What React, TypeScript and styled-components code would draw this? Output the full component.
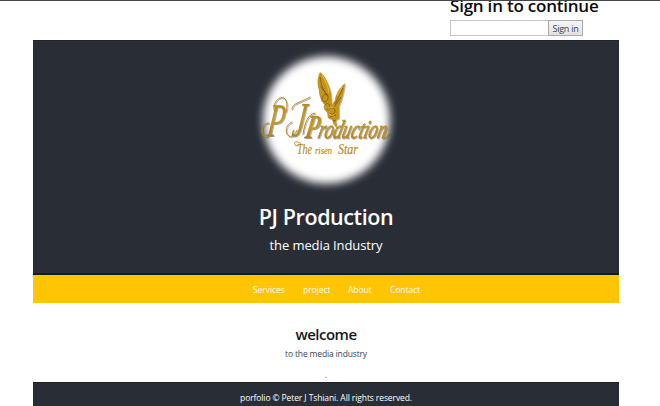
import React from "react";
import styled, { createGlobalStyle } from "styled-components";

const GlobalStyle = createGlobalStyle`
  * { box-sizing: border-box; }
  html, body { margin: 0; padding: 0; background: #fff; overflow: hidden; }
  body { font-family: "Open Sans", "Noto Sans", sans-serif; }
  h1, h2, p { margin: 0; }
`;

const Page = styled.div`
  height: 406px;
  overflow: hidden;
  border-top: 1px solid #444345;
  padding: 0 41px 0 33px;
  display: flex;
  flex-direction: column;
`;

const SignInBar = styled.section`
  height: 39px;
  flex: none;
  padding-left: 417px;
  display: flex;
  flex-direction: column;
`;

const SignInTitle = styled.h2`
  font-size: 17px;
  font-weight: 600;
  line-height: 24px;
  height: 19px;
  margin-top: -7px;
  margin-bottom: 7px;
  letter-spacing: -0.22px;
  white-space: nowrap;
  color: #0b0b0d;
`;

const SignInForm = styled.form`
  display: flex;
  height: 16px;
`;

const SignInInput = styled.input`
  width: 98px;
  height: 16px;
  padding: 0 3px;
  border: 1px solid #c6c6c6;
  border-right: 0;
  border-radius: 0;
  background: #fff;
  outline: none;
`;

const SignInButton = styled.button`
  width: 35px;
  height: 16px;
  padding: 0;
  border: 1px solid #ababab;
  border-radius: 0;
  background: linear-gradient(#f4f4f4, #e2e2e2);
  color: #3b4354;
  font: 400 9px/13px "Open Sans", sans-serif;
  letter-spacing: -0.25px;
`;

const Hero = styled.header`
  height: 235px;
  flex: none;
  background: #292d36;
  border-top: 1px solid #1f232b;
  border-bottom: 2px solid #151a28;
  display: flex;
  flex-direction: column;
  align-items: center;
  color: #fff;
`;

const Logo = styled.svg`
  width: 150px;
  height: 150px;
  margin-top: 4px;
  flex: none;
  display: block;
`;

const HeroTitle = styled.h1`
  font-size: 21.5px;
  font-weight: 600;
  line-height: 28px;
  margin-top: 8px;
  letter-spacing: -0.42px;
  white-space: nowrap;
`;

const HeroSubtitle = styled.p`
  font-size: 13px;
  line-height: 18px;
  margin-top: 5px;
  letter-spacing: -0.1px;
  white-space: nowrap;
`;

const Nav = styled.nav`
  height: 28px;
  flex: none;
  background: #ffc403;
  display: flex;
  gap: 18px;
  padding-left: 220px;
`;

const NavLink = styled.a<{ $width: number }>`
  width: ${(p) => p.$width}px;
  color: #fffdf4;
  font-size: 8.5px;
  line-height: 29px;
  letter-spacing: -0.06px;
  text-decoration: none;
  white-space: nowrap;
`;

const Main = styled.main`
  height: 79px;
  flex: none;
  display: flex;
  flex-direction: column;
  align-items: center;
  padding-top: 21px;
`;

const MainTitle = styled.h2`
  font-size: 15px;
  font-weight: 600;
  line-height: 20px;
  letter-spacing: -0.5px;
  color: #16181e;
`;

const MainText = styled.p`
  font-size: 8.5px;
  line-height: 12px;
  margin-top: 4px;
  letter-spacing: -0.15px;
  color: #3c4554;
  white-space: nowrap;
`;

const Dot = styled.p`
  font-size: 9px;
  line-height: 12px;
  margin-top: 9px;
  color: #4a6070;
`;

const Footer = styled.footer`
  flex: 1;
  background: #292d36;
  border-top: 1px solid #1c2028;
  color: #fff;
  text-align: center;
  font-size: 8.5px;
  line-height: 29px;
  letter-spacing: -0.1px;
  white-space: nowrap;
`;

const LINKS = [
  { label: "Services", width: 32 },
  { label: "project", width: 27 },
  { label: "About", width: 24 },
  { label: "Contact", width: 31 },
];

const script = '"Liberation Serif", serif';

function BrandLogo() {
  return (
    <Logo viewBox="251 45 150 150" role="img" aria-label="PJ Production">
      <defs>
        <filter id="soft" x="-20%" y="-20%" width="140%" height="140%">
          <feGaussianBlur stdDeviation="4" />
        </filter>
        <filter id="shade" x="-10%" y="-10%" width="120%" height="130%">
          <feDropShadow dx="0.7" dy="1" stdDeviation="0.7" floodColor="#343434" floodOpacity="0.5" />
        </filter>
        <linearGradient id="gold" x1="0" y1="0" x2="0" y2="1">
          <stop offset="0" stopColor="#a87a14" />
          <stop offset="0.5" stopColor="#c99c2a" />
          <stop offset="1" stopColor="#9f7114" />
        </linearGradient>
      </defs>
      <circle cx="326.5" cy="120" r="63.5" fill="#fff" filter="url(#soft)" />
      <g filter="url(#shade)" fontFamily={script} fontStyle="italic" fill="url(#gold)">
        <g transform="translate(266 136) skewX(-8)">
          <text fontSize="47" textLength="17" lengthAdjust="spacingAndGlyphs">P</text>
        </g>
        <g transform="translate(291 136) skewX(-8)">
          <text fontSize="49" textLength="13" lengthAdjust="spacingAndGlyphs">J</text>
        </g>
        <g transform="translate(304 138) skewX(-10)" fontWeight="700">
          <text fontSize="34" textLength="14" lengthAdjust="spacingAndGlyphs">P</text>
        </g>
        <g transform="translate(317 137.5) skewX(-14)">
          <text
            fontSize="26"
            textLength="68"
            lengthAdjust="spacingAndGlyphs"
            stroke="#b98a1c"
            strokeWidth="0.6"
          >
            roduction
          </text>
        </g>
        <g fill="none" stroke="#b98a1c" strokeWidth="1" strokeLinecap="round">
          <path d="M274 110c-1-8 5-14 10-12 3 2 4 8 2 14M269 123c-6 0-9 7-6 12 3 5 8 0 9-5" />
          <path d="M292 109c0-6 8-6 18-12M292 122c-6 2-8 11-3 14 4 2 7-3 8-6" />
          <path d="M303 134c2-12 5-20 12-21M383 138c3 0 5-2 6-5" />
        </g>
      </g>
      <g filter="url(#shade)">
        <path d="M320 72c-3 6-3 12-1 18 0 7 3 12 6 15l-1 4 3 3 1 6 4 1 1 4 2 3 2 2-1-8 3-2v-12c3-7 5-14 6-23-5 5-9 9-10 17l-3 5-1-12c-2-8-5-16-11-21z" fill="#c79519" />
        <path d="M320 77c1 7 3 13 7 18M320 86l8 10M322 101c0-5 3-8 5-6 3 3-1 9-4 6M324 107c2-6 7-3 5 0M343 88l-8 16M341 97l-7 10M327 110c3-3 7-3 8 0s-4 6-5 3M330 117l6-2M333 121l3-1" fill="none" stroke="#66521d" strokeWidth="0.7" />
        <path d="M322 75c3 5 6 11 7 18M342 87l-5 9M328 108l6-1M329 114l5 2" fill="none" stroke="#ecc04c" strokeWidth="0.8" />
      </g>
      <g fontFamily={script} fontStyle="italic" fill="#b88914" stroke="#b88914" strokeWidth="0.15">
        <text x="297" y="154" fontSize="15" textLength="15" lengthAdjust="spacingAndGlyphs">The</text>
        <text x="315" y="154" fontSize="10" textLength="17" lengthAdjust="spacingAndGlyphs">risen</text>
        <text x="338" y="154" fontSize="14" textLength="20" lengthAdjust="spacingAndGlyphs">Star</text>
        <path d="M301 144c-4-4-8-2-6 1 2 2 5 0 3-1" fill="none" strokeWidth="0.9" />
      </g>
    </Logo>
  );
}

export default function App() {
  return (
    <>
      <GlobalStyle />
      <Page>
        <SignInBar>
          <SignInTitle>Sign in to continue</SignInTitle>
          <SignInForm>
            <SignInInput aria-label="Account" />
            <SignInButton type="button">Sign in</SignInButton>
          </SignInForm>
        </SignInBar>
        <Hero>
          <BrandLogo />
          <HeroTitle>PJ Production</HeroTitle>
          <HeroSubtitle>the media Industry</HeroSubtitle>
        </Hero>
        <Nav>
          {LINKS.map((l) => (
            <NavLink key={l.label} href="#" $width={l.width}>{l.label}</NavLink>
          ))}
        </Nav>
        <Main>
          <MainTitle>welcome</MainTitle>
          <MainText>to the media industry</MainText>
          <Dot>.</Dot>
        </Main>
        <Footer>porfolio © Peter J Tshiani. All rights reserved.</Footer>
      </Page>
    </>
  );
}
